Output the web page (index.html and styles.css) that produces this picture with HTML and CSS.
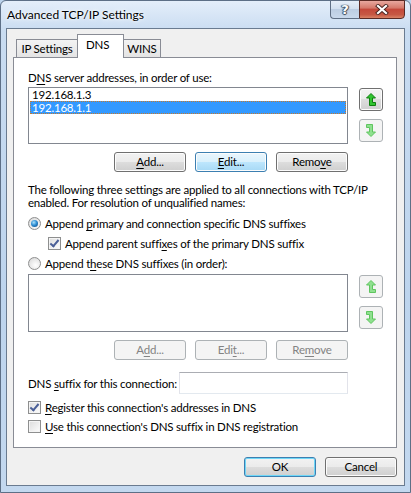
FILE: index.html
```html
<!DOCTYPE html>
<html lang="en">
<head>
    <meta charset="UTF-8" />
    <title>Advanced TCP/IP Settings</title>
    <link rel="stylesheet" href="styles.css">
</head>
<body>
    <div class="window">
        <div class="titlebar">
            <span class="title">Advanced TCP/IP Settings</span>
            <div class="caption-btns">
                <div class="cap help">?</div>
                <div class="cap close">
                    <svg width="14" height="11" viewBox="0 0 14 11">
                        <path d="M3 2 L11 9 M11 2 L3 9" stroke="#4a2420" stroke-width="4" stroke-linecap="square"/>
                        <path d="M3 2 L11 9 M11 2 L3 9" stroke="#fff" stroke-width="2.2" stroke-linecap="square"/>
                    </svg>
                </div>
            </div>
        </div>

        <div class="client">
            <div class="tabs">
                <div class="tab first">IP Settings</div>
                <div class="tab active">DNS</div>
                <div class="tab last">WINS</div>
            </div>

            <div class="panel">
                <div class="label">D<u>N</u>S server addresses, in order of use:</div>
                <div class="list-row">
                    <div class="listbox">
                        <div class="item">192.168.1.3</div>
                        <div class="item selected">192.168.1.1</div>
                    </div>
                    <div class="arrows">
                        <div class="arrow-btn">
                            <svg width="10" height="13" viewBox="0 0 10 13"><path class="up" d="M5 0.5 L9.5 5 L6.5 5 L6.5 9.5 L9.5 9.5 L9.5 12.5 L3.5 12.5 L3.5 5 L0.5 5 Z"/></svg>
                        </div>
                        <div class="arrow-btn disabled">
                            <svg width="10" height="13" viewBox="0 0 10 13"><path class="down" d="M0.5 0.5 L6.5 0.5 L6.5 8 L9.5 8 L5 12.5 L0.5 8 L3.5 8 L3.5 3.5 L0.5 3.5 Z"/></svg>
                        </div>
                    </div>
                </div>
                <div class="btn-row">
                    <div class="btn"><u>A</u>dd...</div>
                    <div class="btn hot"><u>E</u>dit...</div>
                    <div class="btn">Remo<u>v</u>e</div>
                </div>

                <p class="note">The following three settings are applied to all connections with TCP/IP enabled. For resolution of unqualified names:</p>

                <div class="option"><span class="radio checked"></span><span>Append <u>p</u>rimary and connection specific DNS suffixes</span></div>
                <div class="option sub"><span class="check checked"></span><span>Append parent suffi<u>x</u>es of the primary DNS suffix</span></div>
                <div class="option"><span class="radio"></span><span>Append t<u>h</u>ese DNS suffixes (in order):</span></div>

                <div class="list-row second">
                    <div class="listbox"></div>
                    <div class="arrows">
                        <div class="arrow-btn disabled">
                            <svg width="10" height="13" viewBox="0 0 10 13"><path class="up" d="M5 0.5 L9.5 5 L6.5 5 L6.5 9.5 L9.5 9.5 L9.5 12.5 L3.5 12.5 L3.5 5 L0.5 5 Z"/></svg>
                        </div>
                        <div class="arrow-btn disabled">
                            <svg width="10" height="13" viewBox="0 0 10 13"><path class="down" d="M0.5 0.5 L6.5 0.5 L6.5 8 L9.5 8 L5 12.5 L0.5 8 L3.5 8 L3.5 3.5 L0.5 3.5 Z"/></svg>
                        </div>
                    </div>
                </div>
                <div class="btn-row">
                    <div class="btn disabled">A<u>d</u>d...</div>
                    <div class="btn disabled">Edi<u>t</u>...</div>
                    <div class="btn disabled">Re<u>m</u>ove</div>
                </div>

                <div class="suffix-row">
                    <span class="suffix-label">DNS <u>s</u>uffix for this connection:</span>
                    <div class="textbox"></div>
                </div>

                <div class="option low"><span class="check checked"></span><span><u>R</u>egister this connection's addresses in DNS</span></div>
                <div class="option low"><span class="check"></span><span><u>U</u>se this connection's DNS suffix in DNS registration</span></div>
            </div>

            <div class="footer">
                <div class="btn default">OK</div>
                <div class="btn">Cancel</div>
            </div>
        </div>
    </div>
</body>
</html>
```

FILE: styles.css
```css
:root{
    --face: #f0f0f0;
    --border: #898c95;
    --list-border: #828790;
    --select: #3399ff;
    --green: #2fc42f;
    --green-dark: #0f7d0f;
}

body{
    margin: 0;
    font-family: Lato, "Open Sans", sans-serif;
    font-size: 11.5px;
    letter-spacing: -0.2px;
    color: #000;
    background: #bcd3ec;
}
u{
    text-decoration-thickness: 1px;
    text-underline-offset: 2px;
}

.window{
    width: 411px;
    height: 493px;
    box-sizing: border-box;
    border: 1px solid #5d6f86;
    border-radius: 6px 6px 0 0;
    background: linear-gradient(to bottom, #e4eefa 0, #c9dcf1 30px, #bdd4ed 60%, #c3d8ef 100%);
}

/* title bar */
.titlebar{
    height: 27px;
    display: flex;
    justify-content: space-between;
    align-items: flex-start;
}
.title{
    margin: 6px 0 0 6px;
    line-height: 15px;
    font-size: 12px;
    letter-spacing: 0;
    text-shadow: 0 0 6px #fff, 0 0 3px #fff;
}
.caption-btns{
    display: flex;
    margin-right: 5px;
    margin-top: -1px;
}
.cap{
    height: 19px;
    box-sizing: border-box;
    border: 1px solid #5f6f84;
    display: flex;
    justify-content: center;
    align-items: center;
}
.help{
    width: 29px;
    border-right: none;
    border-radius: 0 0 0 4px;
    background: linear-gradient(to bottom, #e6eef8 0, #d3e0ef 45%, #bccde2 50%, #c9d9ec 100%);
    color: #fff;
    font-family: "DejaVu Sans", sans-serif;
    font-weight: bold;
    font-size: 13px;
    text-shadow: 0 0 1px #3c4a5c, 1px 0 1px #3c4a5c, -1px 0 1px #3c4a5c, 0 1px 1px #3c4a5c;
}
.close{
    width: 46px;
    border-color: #5a2a24;
    border-radius: 0 0 4px 0;
    background: linear-gradient(to bottom, #e8a89f 0, #d57a6c 40%, #c4493b 50%, #c65844 80%, #d98266 100%);
}

/* client area */
.client{
    margin: 0 5px;
    height: 458px;
    box-sizing: border-box;
    border: 1px solid #6a7b90;
    background: var(--face);
    padding: 5px 7px 8px 6px;
}

.tabs{
    display: flex;
    align-items: flex-end;
    height: 23px;
    padding-left: 3px;
}
.tab{
    height: 18px;
    box-sizing: border-box;
    border: 1px solid var(--border);
    border-bottom: none;
    background: linear-gradient(to bottom, #f3f3f3, #e4e4e4);
    text-align: center;
    line-height: 17px;
    white-space: nowrap;
}
.tab.first{
    width: 62px;
}
.tab.last{
    width: 38px;
    margin-left: -1px;
}
.tab.active{
    height: 24px;
    margin-bottom: -1px;
    margin-left: -1px;
    width: 47px;
    background: #fff;
    position: relative;
    z-index: 1;
    line-height: 19px;
    text-align: left;
    padding-left: 8px;
}

.panel{
    height: 391px;
    box-sizing: border-box;
    border: 1px solid var(--border);
    background: #fff;
    padding: 12px 13px 0 14px;
}
.label{
    line-height: 15px;
}

.list-row{
    display: flex;
    gap: 11px;
    margin-top: 2px;
}
.listbox{
    width: 320px;
    height: 57px;
    box-sizing: border-box;
    border: 1px solid var(--list-border);
    padding: 0 1px;
}
.item{
    height: 13px;
    line-height: 13px;
    padding-left: 2px;
}
.item.selected{
    background: var(--select);
    color: #fff;
    outline: 1px dotted #c77a2c;
    outline-offset: -1px;
}
.list-row.second{
    margin-top: 1px;
}
.list-row.second .listbox{
    height: 58px;
}

.arrows{
    display: flex;
    flex-direction: column;
    gap: 8px;
    padding-top: 1px;
}
.arrow-btn{
    width: 24px;
    height: 23px;
    box-sizing: border-box;
    border: 1px solid #707070;
    border-radius: 3px;
    box-shadow: inset 0 0 0 1px #fcfcfc;
    background: linear-gradient(to bottom, #f2f2f2 0, #ebebeb 50%, #dddddd 50%, #cfcfcf 100%);
    display: flex;
    justify-content: center;
    align-items: center;
}
.arrow-btn path{
    fill: var(--green);
    stroke: var(--green-dark);
    stroke-width: 1;
    stroke-linejoin: miter;
}
.arrow-btn.disabled{
    border-color: #adb2b5;
    background: #f4f4f4;
    box-shadow: none;
}
.arrow-btn.disabled path{
    fill: #8fe08f;
    stroke: #5fc55f;
}

/* push buttons */
.btn-row{
    display: flex;
    justify-content: flex-end;
    gap: 9px;
    width: 320px;
    margin-top: 8px;
}
.btn{
    width: 72px;
    height: 20px;
    box-sizing: border-box;
    border: 1px solid #707070;
    border-radius: 3px;
    box-shadow: inset 0 0 0 1px #fcfcfc;
    background: linear-gradient(to bottom, #f2f2f2 0, #ebebeb 50%, #dddddd 50%, #cfcfcf 100%);
    text-align: center;
    line-height: 18px;
}
.btn.hot{
    border-color: #3c7fb1;
    background: linear-gradient(to bottom, #eaf6fd 0, #d9f0fc 50%, #bee6fd 50%, #a7d9f5 100%);
}
.btn.default{
    border-color: #3c7fb1;
    box-shadow: inset 0 0 0 1px #6fd7f7;
}
.btn.disabled{
    border-color: #adb2b5;
    background: #f4f4f4;
    box-shadow: none;
    color: #838383;
}

.note{
    margin: 11px 0 4px;
    line-height: 13px;
    width: 345px;
}

/* radios and checkboxes */
.option{
    height: 20px;
    display: flex;
    align-items: center;
    gap: 4px;
    white-space: nowrap;
}
.option.sub{
    padding-left: 20px;
}
.option.low{
    height: 19px;
}
.radio, .check{
    width: 13px;
    height: 13px;
    box-sizing: border-box;
    flex-shrink: 0;
    border: 1px solid #8e8f8f;
    position: relative;
}
.radio{
    border-radius: 50%;
    background: radial-gradient(circle at 60% 65%, #fff 0, #e6e6e6 60%, #cfcfcf 100%);
}
.radio.checked::after{
    content: "";
    position: absolute;
    left: 2px;
    top: 2px;
    width: 7px;
    height: 7px;
    border-radius: 50%;
    background: radial-gradient(circle at 40% 35%, #aee3fb 0, #2f8fd4 45%, #0b3f78 100%);
}
.check{
    background: linear-gradient(135deg, #dcdcdc, #fdfdfd);
    box-shadow: inset 0 0 0 1px #f4f4f4;
}
.check.checked::after{
    content: "";
    position: absolute;
    left: 3px;
    top: 0px;
    width: 3px;
    height: 7px;
    border: solid #4a5f97;
    border-width: 0 2px 2px 0;
    transform: rotate(40deg);
}

.suffix-row{
    display: flex;
    align-items: center;
    gap: 4px;
    margin-top: 12px;
    margin-bottom: 4px;
}
.suffix-label{
    width: 147px;
    white-space: nowrap;
}
.textbox{
    width: 169px;
    height: 22px;
    box-sizing: border-box;
    border: 1px solid #e2e3ea;
    border-top-color: #abadb3;
    border-bottom-color: #e3e9ef;
}

.footer{
    display: flex;
    justify-content: flex-end;
    gap: 9px;
    margin-top: 9px;
}
```
